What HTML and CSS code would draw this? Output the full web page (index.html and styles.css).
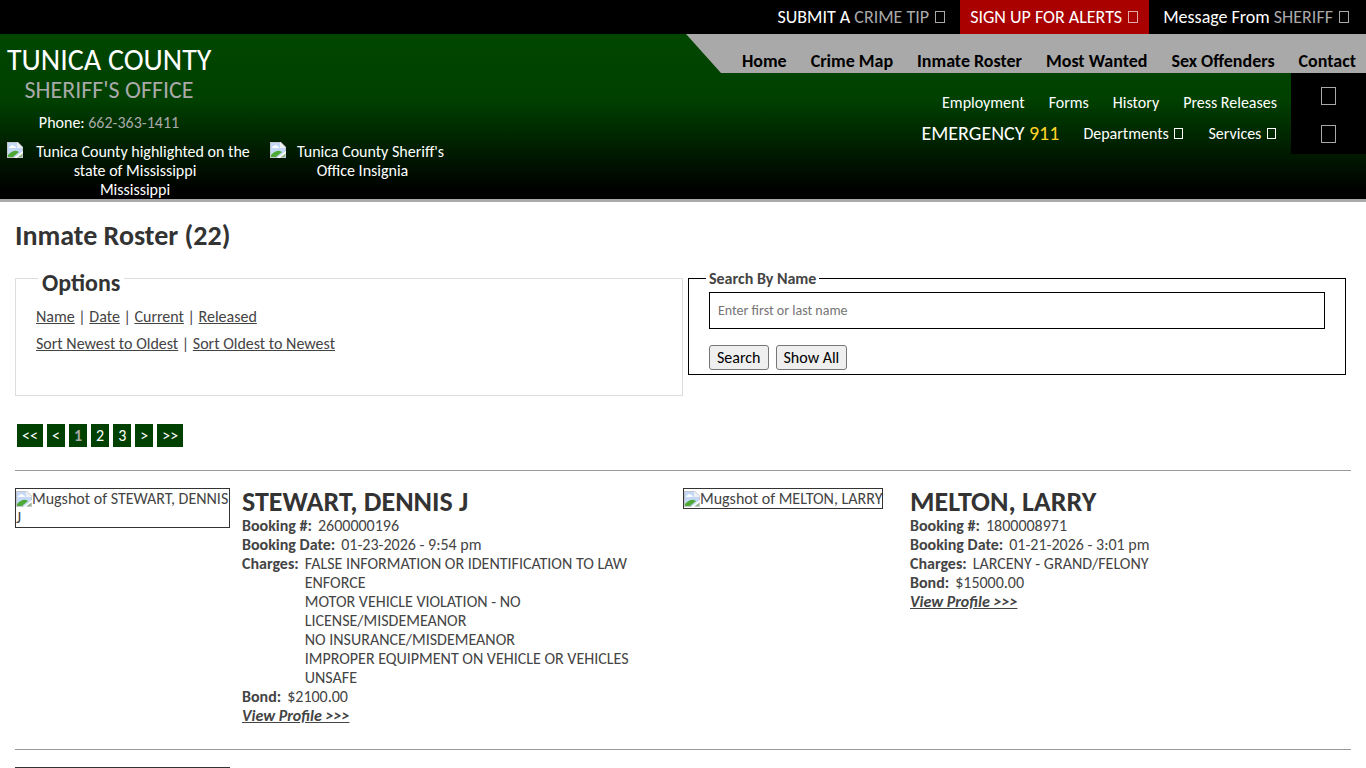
FILE: index.html
```html
<!DOCTYPE html>
<html lang="en">
<head>
    <meta charset="utf-8">
    <title>Inmate Roster - Tunica County Sheriff's Office</title>
    <link rel="stylesheet" href="styles.css">
</head>
<body>
    <svg class="defs" width="0" height="0" aria-hidden="true">
        <symbol id="broken" viewBox="0 0 16 16">
            <path d="M0 0h11l5 5v11H0z" fill="#c3c7cc"/>
            <path d="M1 1h9v5h5v4l-6 5H1z" fill="#c4d8f8"/>
            <path d="M2 6q0-2 2-2 1-2 3 0 2 0 2 2z" fill="#fff"/>
            <path d="M1 15v-2q5-5 9-4l2 1-6 5z" fill="#4ea936"/>
            <path d="M10 0v6h6z" fill="#eef0f2"/>
            <path d="M16 9v2l-6 5H7z" fill="#fff"/>
            <path d="M15 12v3h-4z" fill="#91b882"/>
        </symbol>
    </svg>

    <div class="topbar">
        <a href="#">SUBMIT A <span class="gray">CRIME TIP <i class="glyph"></i></span></a>
        <a href="#" class="alerts">SIGN UP FOR ALERTS <i class="glyph"></i></a>
        <a href="#">Message From <span class="gray">SHERIFF <i class="glyph"></i></span></a>
    </div>

    <header class="header">
        <div class="header-left">
            <div class="brand">
                <div class="county">TUNICA COUNTY</div>
                <div class="office">SHERIFF'S OFFICE</div>
                <div class="phone">Phone: <span class="gray">662-363-1411</span></div>
            </div>
            <div class="seals">
                <div class="seal seal-map">
                    <svg class="broken"><use href="#broken"/></svg>
                    Tunica County highlighted on the<br>state of Mississippi
                    <div>Mississippi</div>
                </div>
                <div class="seal seal-badge">
                    <svg class="broken"><use href="#broken"/></svg>
                    Tunica County Sheriff's<br>Office Insignia
                </div>
            </div>
        </div>
        <div class="header-right">
            <nav class="main-nav">
                <a href="#">Home</a>
                <a href="#">Crime Map</a>
                <a href="#">Inmate Roster</a>
                <a href="#">Most Wanted</a>
                <a href="#">Sex Offenders</a>
                <a href="#">Contact</a>
            </nav>
            <div class="sub-area">
                <nav class="sub-nav">
                    <div class="sub-row">
                        <a href="#">Employment</a>
                        <a href="#">Forms</a>
                        <a href="#">History</a>
                        <a href="#">Press Releases</a>
                    </div>
                    <div class="sub-row">
                        <span class="emergency">EMERGENCY <span class="gold">911</span></span>
                        <a href="#">Departments <i class="glyph"></i></a>
                        <a href="#">Services <i class="glyph"></i></a>
                    </div>
                </nav>
                <div class="social">
                    <a href="#" aria-label="Facebook"><i class="glyph"></i></a>
                    <a href="#" aria-label="Search"><i class="glyph"></i></a>
                </div>
            </div>
        </div>
    </header>

    <main class="content">
        <h1>Inmate Roster (22)</h1>
        <div class="filters">
            <fieldset class="options">
                <legend>Options</legend>
                <div><a href="#">Name</a> | <a href="#">Date</a> | <a href="#">Current</a> | <a href="#">Released</a></div>
                <div><a href="#">Sort Newest to Oldest</a> | <a href="#">Sort Oldest to Newest</a></div>
            </fieldset>
            <form class="search-form">
                <fieldset class="search">
                    <legend><label for="search">Search By Name</label></legend>
                    <input type="text" id="search" name="search" placeholder="Enter first or last name">
                    <div class="buttons">
                        <button type="submit">Search</button>
                        <button type="button">Show All</button>
                    </div>
                </fieldset>
            </form>
        </div>

        <div class="pager">
            <a href="#">&lt;&lt;</a>
            <a href="#">&lt;</a>
            <a href="#" class="current">1</a>
            <a href="#">2</a>
            <a href="#">3</a>
            <a href="#">&gt;</a>
            <a href="#">&gt;&gt;</a>
        </div>

        <div class="roster-row">
            <div class="inmate">
                <div class="photo">
                    <div class="mugshot"><svg class="broken"><use href="#broken"/></svg>Mugshot of STEWART, DENNIS J</div>
                </div>
                <div class="info">
                    <h2>STEWART, DENNIS J</h2>
                    <div class="field"><b>Booking #:</b><span>2600000196</span></div>
                    <div class="field"><b>Booking Date:</b><span>01-23-2026 - 9:54 pm</span></div>
                    <div class="field">
                        <b>Charges:</b>
                        <div>
                            <div>FALSE INFORMATION OR IDENTIFICATION TO LAW ENFORCE</div>
                            <div>MOTOR VEHICLE VIOLATION - NO LICENSE/MISDEMEANOR</div>
                            <div>NO INSURANCE/MISDEMEANOR</div>
                            <div>IMPROPER EQUIPMENT ON VEHICLE OR VEHICLES UNSAFE</div>
                        </div>
                    </div>
                    <div class="field"><b>Bond:</b><span>$2100.00</span></div>
                    <a href="#" class="profile">View Profile &gt;&gt;&gt;</a>
                </div>
            </div>
            <div class="inmate">
                <div class="photo">
                    <div class="mugshot"><svg class="broken"><use href="#broken"/></svg>Mugshot of MELTON, LARRY</div>
                </div>
                <div class="info">
                    <h2>MELTON, LARRY</h2>
                    <div class="field"><b>Booking #:</b><span>1800008971</span></div>
                    <div class="field"><b>Booking Date:</b><span>01-21-2026 - 3:01 pm</span></div>
                    <div class="field"><b>Charges:</b><span>LARCENY - GRAND/FELONY</span></div>
                    <div class="field"><b>Bond:</b><span>$15000.00</span></div>
                    <a href="#" class="profile">View Profile &gt;&gt;&gt;</a>
                </div>
            </div>
        </div>

        <div class="roster-row">
            <div class="inmate">
                <div class="photo">
                    <div class="mugshot mugshot-empty"></div>
                </div>
            </div>
        </div>
    </main>
</body>
</html>
```
FILE: styles.css
```css
* {
    box-sizing: border-box;
}

body {
    margin: 0;
    font-family: Calibri, Carlito, Lato, sans-serif;
    font-size: 16px;
    line-height: 19px;
    color: #444;
    background-color: #fff;
}

a {
    color: inherit;
}

.defs {
    position: absolute;
}

.gray {
    color: #a9a9a9;
}

.gold {
    color: #ffd42a;
}

/* hollow box shown for icon characters */
.glyph {
    display: inline-block;
    width: 9px;
    height: 11px;
    margin: 0 1px 0 2px;
    border: 1px solid currentColor;
}

.broken {
    width: 16px;
    height: 16px;
}

/* top bar */
.topbar {
    display: flex;
    justify-content: flex-end;
    gap: 4px;
    padding-right: 6px;
    background-color: #000;
    color: #fff;
    font-size: 18px;
    line-height: 34px;
}

.topbar a {
    padding: 0 10px;
    text-decoration: none;
}

.topbar .glyph {
    width: 10px;
    height: 12px;
}

.topbar .alerts {
    background-color: #a90000;
}

.alerts .glyph {
    border-color: #e3a9a9;
}

/* header */
.header {
    display: flex;
    justify-content: space-between;
    height: 168px;
    border-bottom: 3px solid #a9a9a9;
    background: linear-gradient(#004600 0%, #004000 40%, #000 95%);
    color: #fff;
}

.header-left {
    padding: 9px 0 0 7px;
}

.brand {
    width: 204px;
    text-align: center;
    white-space: nowrap;
}

.county {
    font-size: 30px;
    line-height: 34px;
}

.office {
    color: #a9a9a9;
    font-size: 24px;
    line-height: 26px;
}

.phone {
    margin-top: 10px;
}

.seals {
    display: flex;
    gap: 7px;
    margin-top: 10px;
    text-align: center;
}

.seal .broken {
    float: left;
}

.seal-map {
    width: 256px;
}

.seal-badge {
    width: 185px;
}

.header-right {
    width: 680px;
}

.main-nav {
    display: flex;
    justify-content: flex-end;
    gap: 24px;
    padding: 18px 10px 2px 0;
    background-color: #a9a9a9;
    clip-path: polygon(0 0, 100% 0, 100% 100%, 35px 100%);
    color: #000;
    font-size: 18px;
    font-weight: bold;
}

.main-nav a,
.sub-nav a {
    text-decoration: none;
}

.sub-area {
    display: flex;
    justify-content: flex-end;
}

.sub-nav {
    padding: 14px 14px 0 0;
}

.sub-row {
    display: flex;
    justify-content: flex-end;
    align-items: center;
    gap: 24px;
    height: 31px;
}

.emergency {
    font-size: 20px;
}

.social {
    display: flex;
    flex-direction: column;
    align-items: center;
    gap: 20px;
    width: 75px;
    height: 81px;
    padding-top: 14px;
    background-color: #000;
    color: #a9a9a9;
}

.social a {
    display: flex;
}

.social .glyph {
    width: 15px;
    height: 18px;
    margin: 0;
}

/* page content */
.content {
    padding: 20px 15px;
}

h1 {
    margin: 0 0 15px;
    color: #333;
    font-size: 28px;
    line-height: 28px;
}

.filters {
    display: flex;
    align-items: flex-start;
}

fieldset {
    margin: 0;
}

.options {
    width: 50%;
    height: 131px;
    padding: 11px 20px 0;
    border: 1px solid #ddd;
    line-height: 27px;
}

.options legend {
    margin-left: 2px;
    padding: 9px 4px 0;
    color: #333;
    font-size: 24px;
    font-weight: bold;
    line-height: 18px;
}

.search-form {
    width: 50%;
    padding: 4px 5px 0;
}

.search {
    padding: 4px 20px;
    border: 1px solid #000;
}

.search legend {
    margin-left: -3px;
    padding: 0 3px;
    font-weight: bold;
}

.search input {
    display: block;
    width: 100%;
    height: 37px;
    padding: 0 8px;
    border: 1px solid #000;
    font-family: inherit;
    font-size: 14px;
}

.search input::placeholder {
    color: #757575;
}

.buttons {
    display: flex;
    gap: 7px;
    margin-top: 16px;
}

button {
    height: 25px;
    padding: 0 7px;
    border: 1px solid #767676;
    border-radius: 3px;
    background-color: #efefef;
    color: #000;
    font-family: inherit;
    font-size: 16px;
}

.pager {
    display: flex;
    gap: 4px;
    margin: 28px 2px 23px;
}

.pager a {
    padding: 2px 5px;
    background-color: #004000;
    color: #fff;
    text-decoration: none;
}

.pager .current {
    color: #a9a9a9;
    font-weight: bold;
}

.roster-row {
    display: flex;
    padding: 17px 0 24px;
    border-top: 1px solid #999;
}

.inmate {
    display: flex;
    gap: 12px;
    width: 50%;
    padding-right: 12px;
}

.photo {
    flex: none;
    width: 215px;
}

.mugshot {
    display: inline-block;
    max-width: 100%;
    border: 1px solid #333;
}

.mugshot .broken {
    vertical-align: -3px;
}

.mugshot-empty {
    width: 100%;
    height: 40px;
}

h2 {
    margin: 0;
    color: #333;
    font-size: 28px;
    line-height: 28px;
}

.field {
    display: flex;
    gap: 6px;
}

.field b {
    flex: none;
}

.profile {
    font-style: italic;
    font-weight: bold;
}
```
